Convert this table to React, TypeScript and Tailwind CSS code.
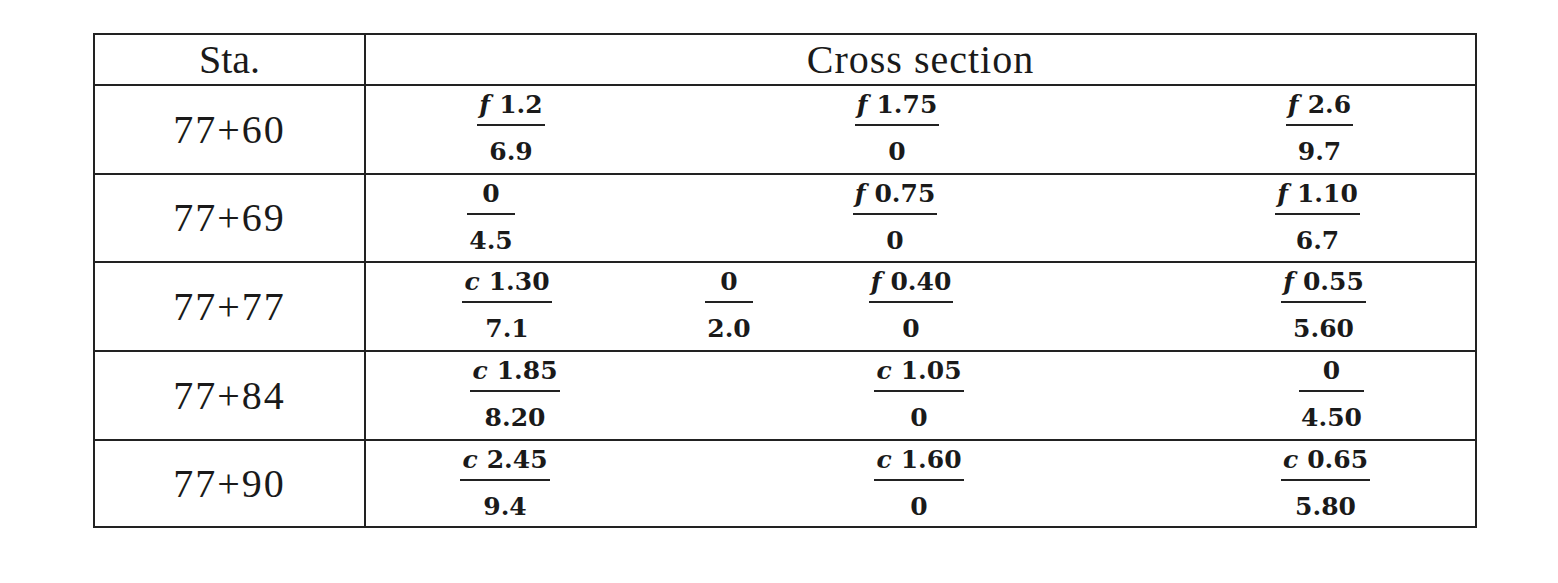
type Frac = {
  col: string;
  shift: string;
  v?: string;
  num: string;
  den: string;
};

type Row = {
  sta: string;
  h: string;
  fracs: Frac[];
};

const rows: Row[] = [
  {
    sta: "77+60",
    h: "h-[89px]",
    fracs: [
      { col: "col-start-1", shift: "translate-x-[2px]", v: "f", num: "1.2", den: "6.9" },
      { col: "col-start-3", shift: "-translate-x-[12px]", v: "f", num: "1.75", den: "0" },
      { col: "col-start-5", shift: "-translate-x-[4px]", v: "f", num: "2.6", den: "9.7" },
    ],
  },
  {
    sta: "77+69",
    h: "h-[88px]",
    fracs: [
      { col: "col-start-1", shift: "-translate-x-[18px]", num: "0", den: "4.5" },
      { col: "col-start-3", shift: "-translate-x-[14px]", v: "f", num: "0.75", den: "0" },
      { col: "col-start-5", shift: "-translate-x-[6px]", v: "f", num: "1.10", den: "6.7" },
    ],
  },
  {
    sta: "77+77",
    h: "h-[89px]",
    fracs: [
      { col: "col-start-1", shift: "-translate-x-[2px]", v: "c", num: "1.30", den: "7.1" },
      { col: "col-start-2", shift: "translate-x-0", num: "0", den: "2.0" },
      { col: "col-start-3", shift: "translate-x-[2px]", v: "f", num: "0.40", den: "0" },
      { col: "col-start-5", shift: "translate-x-0", v: "f", num: "0.55", den: "5.60" },
    ],
  },
  {
    sta: "77+84",
    h: "h-[89px]",
    fracs: [
      { col: "col-start-1", shift: "translate-x-[6px]", v: "c", num: "1.85", den: "8.20" },
      { col: "col-start-3", shift: "translate-x-[10px]", v: "c", num: "1.05", den: "0" },
      { col: "col-start-5", shift: "translate-x-[8px]", num: "0", den: "4.50" },
    ],
  },
  {
    sta: "77+90",
    h: "h-[87px]",
    fracs: [
      { col: "col-start-1", shift: "-translate-x-[4px]", v: "c", num: "2.45", den: "9.4" },
      { col: "col-start-3", shift: "translate-x-[10px]", v: "c", num: "1.60", den: "0" },
      { col: "col-start-5", shift: "translate-x-[2px]", v: "c", num: "0.65", den: "5.80" },
    ],
  },
];

function Fraction({ f }: { f: Frac }) {
  return (
    <div className={`${f.col} ${f.shift} row-start-1 justify-self-center self-start flex flex-col items-stretch pt-[7px] font-['DejaVu_Serif',serif] font-bold text-[25px] text-[#1a1a1a]`}>
      <div className="px-[2px] text-center leading-[24px] whitespace-nowrap">
        {f.v && <span className="italic mr-[9px]">{f.v}</span>}
        {f.num}
      </div>
      <div className="mt-[7px] h-[2px] bg-[#222]" />
      <div className="mt-[14px] px-[2px] text-center leading-[24px] whitespace-nowrap">{f.den}</div>
    </div>
  );
}

export default function App() {
  return (
    <div className="w-[1558px] h-[583px] bg-white pt-[33px] pl-[93px]">
      <div className="w-[1384px] border-2 border-[#222] font-['Liberation_Serif',serif] text-[#1a1a1a]">
        <div className="flex h-[49px]">
          <div className="w-[269px] shrink-0 flex items-center justify-center text-[40px] leading-none">Sta.</div>
          <div className="flex-1 border-l-2 border-[#222] flex items-center justify-center text-[40px] leading-none tracking-[1px]">
            Cross section
          </div>
        </div>
        {rows.map((r) => (
          <div key={r.sta} className={`flex border-t-2 border-[#222] ${r.h}`}>
            <div className="w-[269px] shrink-0 flex items-center justify-center text-[40px] leading-none tracking-[2px]">
              {r.sta}
            </div>
            <div className="flex-1 min-w-0 border-l-2 border-[#222] grid grid-cols-[286px_154px_206px_160px_303px]">
              {r.fracs.map((f, i) => (
                <Fraction key={i} f={f} />
              ))}
            </div>
          </div>
        ))}
      </div>
    </div>
  );
}
